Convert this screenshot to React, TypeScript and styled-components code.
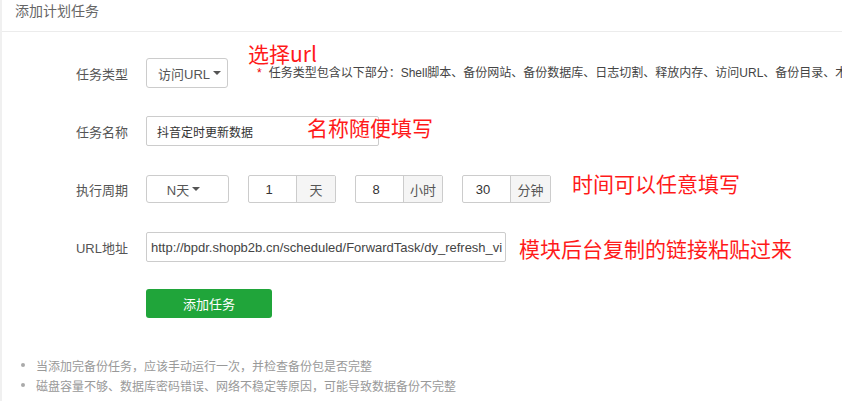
import React from "react";
import styled, { createGlobalStyle } from "styled-components";

const Global = createGlobalStyle`
  html, body { margin: 0; padding: 0; background: #fff; overflow: hidden; }
  body {
    font-family: "Liberation Sans", "Noto Sans CJK SC", sans-serif;
    color: #555;
  }
  * { box-sizing: border-box; }
`;

const Page = styled.div`
  border-left: 2px solid #f0f0f0;
  min-height: 401px;
  width: 842px;
  overflow: hidden;
`;

const Header = styled.div`
  height: 32px;
  border-bottom: 1px solid #ececec;
  padding: 0 13px;
  font-size: 14px;
  line-height: 22px;
  color: #666;
`;

const Form = styled.div`
  padding-top: 26px;
  display: flex;
  flex-direction: column;
  gap: 28px;
`;

const Row = styled.div`
  position: relative;
  display: flex;
  align-items: center;
  height: 30px;
  white-space: nowrap;
  & > * { flex-shrink: 0; }
`;

const Label = styled.div`
  width: 126px;
  margin-right: 18px;
  text-align: right;
  font-size: 13px;
  color: #555;
`;

const Select = styled.div<{ $w: number; $center?: boolean }>`
  width: ${(p) => p.$w}px;
  height: ${(p) => (p.$center ? 28 : 30)}px;
  border: 1px solid #ccc;
  border-radius: 3px;
  display: flex;
  align-items: center;
  justify-content: ${(p) => (p.$center ? "center" : "flex-start")};
  padding: ${(p) => (p.$center ? "0 8px 0 0" : "0 0 0 11px")};
  font-size: 13px;
  color: #555;
`;

const Caret = styled.span`
  display: inline-block;
  width: 0;
  height: 0;
  margin-left: 3px;
  border-left: 4px solid transparent;
  border-right: 4px solid transparent;
  border-top: 4px solid #555;
`;

const Tip = styled.div`
  margin-left: 29px;
  font-size: 12px;
  line-height: 14px;
  color: #444;
  display: flex;
  align-items: center;
`;

const Star = styled.span`
  color: #ef0000;
  margin-right: 7px;
`;

const TextInput = styled.div<{ $w: number }>`
  width: ${(p) => p.$w}px;
  height: 30px;
  border: 1px solid #ccc;
  border-radius: 2px;
  padding: 0 10px;
  display: flex;
  align-items: center;
  overflow: hidden;
  font-size: 12px;
  color: #333;
`;

const UrlInput = styled(TextInput)`
  padding: 0 0 0 4px;
  font-size: 13px;
  color: #444;
`;

const Group = styled.div`
  display: flex;
  height: 28px;
  margin-left: 19px;
  border: 1px solid #ccc;
  border-radius: 2px;
  font-size: 13px;
`;

const GroupInput = styled.div`
  width: 47px;
  display: flex;
  align-items: center;
  justify-content: center;
  padding-right: 7px;
  color: #333;
`;

const Addon = styled.div<{ $w: number }>`
  width: ${(p) => p.$w}px;
  border-left: 1px solid #ccc;
  background: #f5f5f5;
  display: flex;
  align-items: center;
  justify-content: center;
  color: #555;
`;

const Note = styled.div<{ $left: number; $top: number }>`
  position: absolute;
  left: ${(p) => p.$left}px;
  top: ${(p) => p.$top}px;
  font-size: 21px;
  line-height: 21px;
  color: #ff1a1a;
  font-family: "Noto Sans CJK SC", sans-serif;
  white-space: nowrap;
`;

const ButtonRow = styled.div`
  padding-left: 144px;
  margin-top: -1px;
`;

const Button = styled.div`
  width: 126px;
  height: 29px;
  border-radius: 3px;
  background: #20a53a;
  color: #fff;
  font-size: 13px;
  display: flex;
  align-items: center;
  justify-content: center;
`;

const List = styled.ul`
  list-style: none;
  margin: 37px 0 0;
  padding: 0 0 0 19px;
`;

const Item = styled.li`
  display: flex;
  align-items: center;
  height: 20px;
  font-size: 12px;
  color: #999;
  white-space: nowrap;
  &::before {
    content: "";
    width: 4px;
    height: 4px;
    border-radius: 50%;
    background: #aaa;
    margin-right: 11px;
  }
`;

export default function App() {
  return (
    <>
      <Global />
      <Page>
        <Header>添加计划任务</Header>
        <Form>
          <Row>
            <Label>任务类型</Label>
            <Select $w={82}>
              访问URL
              <Caret />
            </Select>
            <Tip>
              <Star>*</Star>
              任务类型包含以下部分：Shell脚本、备份网站、备份数据库、日志切割、释放内存、访问URL、备份目录、木
            </Tip>
            <Note $left={246} $top={-15}>选择url</Note>
          </Row>
          <Row>
            <Label>任务名称</Label>
            <TextInput $w={233}>抖音定时更新数据</TextInput>
            <Note $left={305} $top={1}>名称随便填写</Note>
          </Row>
          <Row>
            <Label>执行周期</Label>
            <Select $w={83} $center>
              N天
              <Caret />
            </Select>
            <Group>
              <GroupInput>1</GroupInput>
              <Addon $w={39}>天</Addon>
            </Group>
            <Group>
              <GroupInput>8</GroupInput>
              <Addon $w={39}>小时</Addon>
            </Group>
            <Group>
              <GroupInput>30</GroupInput>
              <Addon $w={40}>分钟</Addon>
            </Group>
            <Note $left={570} $top={-1}>时间可以任意填写</Note>
          </Row>
          <Row>
            <Label>URL地址</Label>
            <UrlInput $w={360}>
              http://bpdr.shopb2b.cn/scheduled/ForwardTask/dy_refresh_vi
            </UrlInput>
            <Note $left={517} $top={6}>模块后台复制的链接粘贴过来</Note>
          </Row>
          <ButtonRow>
            <Button>添加任务</Button>
          </ButtonRow>
        </Form>
        <List>
          <Item>当添加完备份任务，应该手动运行一次，并检查备份包是否完整</Item>
          <Item>磁盘容量不够、数据库密码错误、网络不稳定等原因，可能导致数据备份不完整</Item>
        </List>
      </Page>
    </>
  );
}
